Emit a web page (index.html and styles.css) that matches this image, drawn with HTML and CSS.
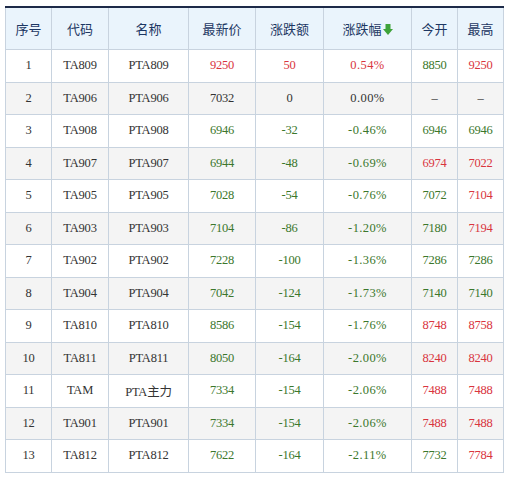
FILE: index.html
```html
<!DOCTYPE html>
<html lang="zh">
<head>
<meta charset="utf-8">
<link rel="stylesheet" href="styles.css">
</head>
<body>
<table class="quotes">
  <colgroup>
    <col class="c-no"><col class="c-code"><col class="c-name"><col class="c-last"><col class="c-chg"><col class="c-pct"><col class="c-open"><col class="c-high">
  </colgroup>
  <thead>
    <tr>
      <th>序号</th><th>代码</th><th>名称</th><th>最新价</th><th>涨跌额</th>
      <th>涨跌幅<svg class="arrow" width="10" height="11" viewBox="0 0 10 11"><path d="M2.5 0H7.5V5H10L5 11L0 5H2.5Z" fill="#3ea33a"/></svg></th>
      <th>今开</th><th>最高</th>
    </tr>
  </thead>
  <tbody>
    <tr><td>1</td><td>TA809</td><td>PTA809</td><td class="up">9250</td><td class="up">50</td><td class="up pct">0.54%</td><td class="dn">8850</td><td class="up">9250</td></tr>
    <tr><td>2</td><td>TA906</td><td>PTA906</td><td>7032</td><td>0</td><td class="pct">0.00%</td><td>–</td><td>–</td></tr>
    <tr><td>3</td><td>TA908</td><td>PTA908</td><td class="dn">6946</td><td class="dn">-32</td><td class="dn pct">-0.46%</td><td class="dn">6946</td><td class="dn">6946</td></tr>
    <tr><td>4</td><td>TA907</td><td>PTA907</td><td class="dn">6944</td><td class="dn">-48</td><td class="dn pct">-0.69%</td><td class="up">6974</td><td class="up">7022</td></tr>
    <tr><td>5</td><td>TA905</td><td>PTA905</td><td class="dn">7028</td><td class="dn">-54</td><td class="dn pct">-0.76%</td><td class="dn">7072</td><td class="up">7104</td></tr>
    <tr><td>6</td><td>TA903</td><td>PTA903</td><td class="dn">7104</td><td class="dn">-86</td><td class="dn pct">-1.20%</td><td class="dn">7180</td><td class="up">7194</td></tr>
    <tr><td>7</td><td>TA902</td><td>PTA902</td><td class="dn">7228</td><td class="dn">-100</td><td class="dn pct">-1.36%</td><td class="dn">7286</td><td class="dn">7286</td></tr>
    <tr><td>8</td><td>TA904</td><td>PTA904</td><td class="dn">7042</td><td class="dn">-124</td><td class="dn pct">-1.73%</td><td class="dn">7140</td><td class="dn">7140</td></tr>
    <tr><td>9</td><td>TA810</td><td>PTA810</td><td class="dn">8586</td><td class="dn">-154</td><td class="dn pct">-1.76%</td><td class="up">8748</td><td class="up">8758</td></tr>
    <tr><td>10</td><td>TA811</td><td>PTA811</td><td class="dn">8050</td><td class="dn">-164</td><td class="dn pct">-2.00%</td><td class="up">8240</td><td class="up">8240</td></tr>
    <tr><td>11</td><td>TAM</td><td>PTA主力</td><td class="dn">7334</td><td class="dn">-154</td><td class="dn pct">-2.06%</td><td class="up">7488</td><td class="up">7488</td></tr>
    <tr><td>12</td><td>TA901</td><td>PTA901</td><td class="dn">7334</td><td class="dn">-154</td><td class="dn pct">-2.06%</td><td class="up">7488</td><td class="up">7488</td></tr>
    <tr><td>13</td><td>TA812</td><td>PTA812</td><td class="dn">7622</td><td class="dn">-164</td><td class="dn pct">-2.11%</td><td class="dn">7732</td><td class="up">7784</td></tr>
  </tbody>
</table>
</body>
</html>
```

FILE: styles.css
```css
html, body {
  margin: 0;
  padding: 0;
  background: #ffffff;
}

body {
  padding: 6px 0 0 5px;
}

.quotes {
  border-collapse: collapse;
  table-layout: fixed;
  width: 498px;
  border-top: 2px solid #1d2a48;
  font-family: "Liberation Serif", "Noto Sans CJK SC", serif;
  font-size: 12.5px;
  color: #333333;
}

.c-no { width: 46px; }
.c-code { width: 57px; }
.c-name { width: 80px; }
.c-last { width: 67px; }
.c-chg { width: 68px; }
.c-pct { width: 88px; }
.c-open { width: 46px; }
.c-high { width: 46px; }

.quotes th,
.quotes td {
  border: 1px solid #c8d3df;
  text-align: center;
  padding: 0;
  white-space: nowrap;
}

.quotes th {
  height: 41px;
  background: #eaf4fc;
  font-family: "Noto Sans CJK SC", sans-serif;
  font-weight: normal;
  font-size: 13px;
  color: #1d3763;
}

.quotes td {
  height: 31.5px;
  letter-spacing: -0.2px;
}

.quotes tbody tr:nth-child(even) td {
  background: #f4f4f4;
}

.quotes td.pct {
  letter-spacing: 0.4px;
}

.up { color: #d9343e; }
.dn { color: #3b772c; }

.arrow {
  vertical-align: -1px;
  margin-left: 1px;
}
```
